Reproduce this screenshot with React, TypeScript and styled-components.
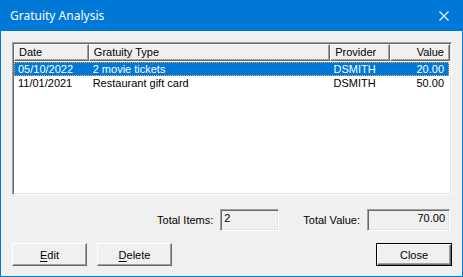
import React, {useState} from 'react';
import styled, {createGlobalStyle} from 'styled-components';

type Gratuity = {
    date: string
    type: string
    provider: string
    value: string
}

const rows: Gratuity[] = [
    {date: '05/10/2022', type: '2 movie tickets', provider: 'DSMITH', value: '20.00'},
    {date: '11/01/2021', type: 'Restaurant gift card', provider: 'DSMITH', value: '50.00'},
]

const columns = [
    {label: 'Date', width: 75, right: false},
    {label: 'Gratuity Type', width: 242, right: false},
    {label: 'Provider', width: 60, right: false},
    {label: 'Value', width: 60, right: true},
]

const App = () => {
    const [selected, setSelected] = useState<number>(0)
    return (
        <>
            <GlobalStyle/>
            <Window>
                <TitleBar>
                    <Title>Gratuity Analysis</Title>
                    <CloseX viewBox="0 0 10 10" width="10" height="10">
                        <path d="M0.5 0.5 L9.5 9.5 M9.5 0.5 L0.5 9.5" stroke="#fff" strokeWidth="1.1"/>
                    </CloseX>
                </TitleBar>
                <Body>
                    <ListBox>
                        <HeaderRow>
                            {columns.map(c => (
                                <HeaderCell key={c.label} $width={c.width} $right={c.right}>{c.label}</HeaderCell>
                            ))}
                        </HeaderRow>
                        {rows.map((r, i) => (
                            <Row key={r.date} $selected={i === selected} onClick={() => setSelected(i)}>
                                <Cell $width={75}>{r.date}</Cell>
                                <Cell $width={242}>{r.type}</Cell>
                                <Cell $width={60}>{r.provider}</Cell>
                                <Cell $width={58} $right>{r.value}</Cell>
                            </Row>
                        ))}
                    </ListBox>

                    <TotalsRow>
                        <Label>Total Items:</Label>
                        <ReadOnlyBox $width={59}>2</ReadOnlyBox>
                        <Label $gap={24}>Total Value:</Label>
                        <ReadOnlyBox $width={83} $right>70.00</ReadOnlyBox>
                    </TotalsRow>

                    <ButtonRow>
                        <Button><u>E</u>dit</Button>
                        <Button><u>D</u>elete</Button>
                        <Spacer/>
                        <Button $default>Close</Button>
                    </ButtonRow>
                </Body>
            </Window>
        </>
    );
};

export default App;


const GlobalStyle = createGlobalStyle`
  html, body {
    margin: 0;
    padding: 0;
    background: #f0f0f0;
  }
  body {
    font-family: "Liberation Sans", Arial, sans-serif;
    font-size: 11px;
    color: #000;
  }
`

const Window = styled.div`
  width: 463px;
  height: 277px;
  box-sizing: border-box;
  border: 1px solid #0078d7;
  border-top: none;
  background: #f0f0f0;
  display: flex;
  flex-direction: column;
`

const TitleBar = styled.div`
  height: 31px;
  flex-shrink: 0;
  background: #0078d7;
  display: flex;
  align-items: center;
  justify-content: space-between;
  padding: 0 12px 0 9px;
`

const Title = styled.div`
  color: #fff;
  font-family: "Noto Sans", "Open Sans", sans-serif;
  font-size: 12px;
  padding-bottom: 1px;
`

const CloseX = styled.svg`
  display: block;
  margin-right: 1px;
`

const Body = styled.div`
  flex: 1;
  padding: 11px 10px 0 11px;
  display: flex;
  flex-direction: column;
`

const ListBox = styled.div`
  height: 153px;
  box-sizing: border-box;
  background: #fff;
  border-top: 1px solid #a0a0a0;
  border-left: 1px solid #a0a0a0;
  border-right: 1px solid #fff;
  border-bottom: 1px solid #fff;
  box-shadow: inset 1px 1px 0 #696969, inset -1px -1px 0 #e3e3e3;
  padding: 1px;
`

const HeaderRow = styled.div`
  display: flex;
  height: 17px;
  margin-bottom: 1px;
`

const HeaderCell = styled.div<{ $width: number, $right?: boolean }>`
  width: ${p => p.$width}px;
  box-sizing: border-box;
  background: #f0f0f0;
  border-top: 1px solid #fff;
  border-left: 1px solid #fff;
  border-right: 1px solid #696969;
  border-bottom: 1px solid #696969;
  box-shadow: inset -1px -1px 0 #a0a0a0;
  padding: 0 ${p => p.$right ? 5 : 4}px 0 4px;
  line-height: 15px;
  text-align: ${p => p.$right ? 'right' : 'left'};
  white-space: nowrap;
`

const Row = styled.div<{ $selected?: boolean }>`
  display: flex;
  height: 14px;
  width: 435px;
  box-sizing: border-box;
  line-height: 12px;
  background: ${p => p.$selected ? '#0078d7' : 'transparent'};
  color: ${p => p.$selected ? '#fff' : '#000'};
  border: 1px dotted ${p => p.$selected ? '#f7a35c' : 'transparent'};
  cursor: default;
`

const Cell = styled.div<{ $width: number, $right?: boolean }>`
  width: ${p => p.$width}px;
  box-sizing: border-box;
  padding: 0 4px 0 3px;
  text-align: ${p => p.$right ? 'right' : 'left'};
  white-space: nowrap;
  overflow: hidden;
`

const TotalsRow = styled.div`
  display: flex;
  justify-content: flex-end;
  align-items: center;
  margin-top: 14px;
  margin-right: 2px;
  height: 22px;
`

const Label = styled.div<{ $gap?: number }>`
  margin-left: ${p => p.$gap || 0}px;
  margin-right: 7px;
`

const ReadOnlyBox = styled.div<{ $width: number, $right?: boolean }>`
  width: ${p => p.$width}px;
  height: 22px;
  box-sizing: border-box;
  background: #f0f0f0;
  border-top: 1px solid #a0a0a0;
  border-left: 1px solid #a0a0a0;
  border-right: 1px solid #fff;
  border-bottom: 1px solid #fff;
  box-shadow: inset 1px 1px 0 #696969, inset -1px -1px 0 #e3e3e3;
  padding: 2px 4px 0 3px;
  text-align: ${p => p.$right ? 'right' : 'left'};
`

const ButtonRow = styled.div`
  display: flex;
  gap: 10px;
  margin-top: 12px;
`

const Spacer = styled.div`
  flex: 1;
`

const Button = styled.button<{ $default?: boolean }>`
  width: ${p => p.$default ? 76 : 75}px;
  height: 23px;
  box-sizing: border-box;
  font-family: "Liberation Sans", Arial, sans-serif;
  font-size: 11px;
  color: #000;
  background: #f0f0f0;
  padding: 0;
  border-top: 1px solid ${p => p.$default ? '#000' : '#fff'};
  border-left: 1px solid ${p => p.$default ? '#000' : '#fff'};
  border-right: 1px solid #000;
  border-bottom: 1px solid #000;
  box-shadow: ${p => p.$default
    ? 'inset 1px 1px 0 #fff, inset -1px -1px 0 #696969, inset -2px -2px 0 #a0a0a0'
    : 'inset -1px -1px 0 #a0a0a0'};
  border-right-color: ${p => p.$default ? '#000' : '#696969'};
  border-bottom-color: ${p => p.$default ? '#000' : '#696969'};

  u {
    text-decoration-thickness: 1px;
    text-underline-offset: 2px;
  }
`
